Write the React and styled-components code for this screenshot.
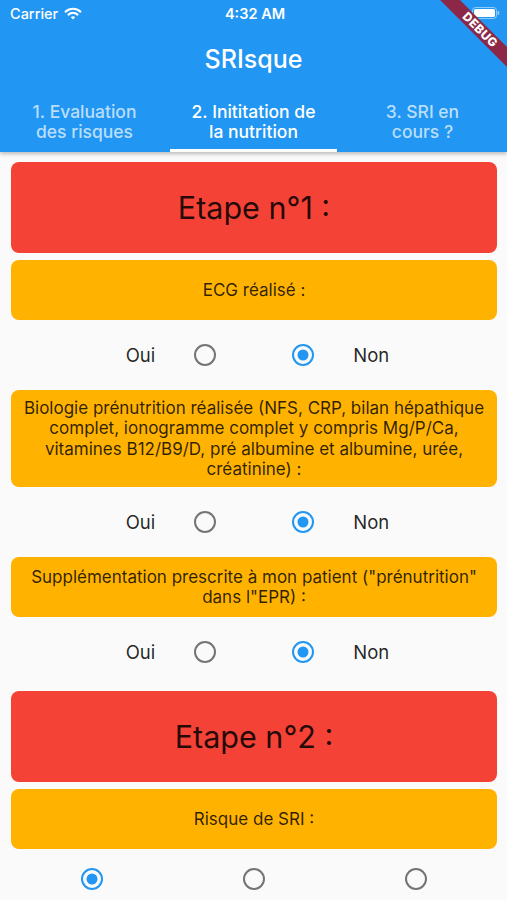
import React from 'react'
import styled, { createGlobalStyle } from 'styled-components'

const GlobalStyle = createGlobalStyle`
  body {
    margin: 0;
    background: #fafafa;
    font-family: Inter, "Noto Sans", sans-serif;
  }
`

const Screen = styled.div`
  position: relative;
  width: 507px;
  min-height: 900px;
  overflow: hidden;
  background: #fafafa;
`

const Header = styled.header`
  background: #2196f3;
  box-shadow: 0 2px 4px rgba(0, 0, 0, 0.25);
  color: #fff;
  position: relative;
  z-index: 1;
`

const StatusBar = styled.div`
  height: 24px;
  padding: 2px 7px 0 10px;
  box-sizing: border-box;
  display: grid;
  grid-template-columns: 1fr auto 1fr;
  align-items: center;
  font-size: 14.5px;
`

const Carrier = styled.div`
  display: flex;
  align-items: center;
  gap: 6px;
  font-weight: 500;
`

const Time = styled.div`
  font-weight: 600;
`

const Battery = styled.div`
  display: flex;
  justify-content: flex-end;
`

const Toolbar = styled.div`
  height: 69px;
  display: flex;
  align-items: center;
  justify-content: center;
  font-size: 25px;
  font-weight: 500;
`

const TabBar = styled.div`
  height: 59px;
  display: grid;
  grid-template-columns: repeat(3, 1fr);
`

const Tab = styled.div`
  position: relative;
  display: flex;
  align-items: center;
  justify-content: center;
  text-align: center;
  font-size: 17.5px;
  line-height: 20px;
  font-weight: 500;
  padding-bottom: 2px;
  color: ${props => props.active ? '#fff' : 'rgba(255, 255, 255, 0.7)'};

  &::after {
    content: '';
    display: ${props => props.active ? 'block' : 'none'};
    position: absolute;
    left: 1px;
    right: 1px;
    bottom: 0;
    height: 3px;
    background: #fff;
  }
`

const Content = styled.main`
  padding: 10px 10px 0 11px;
`

const StepCard = styled.div`
  height: 91px;
  margin-top: ${props => props.spaced ? '4px' : '0'};
  border-radius: 8px;
  background: #f44336;
  display: flex;
  align-items: center;
  justify-content: center;
  font-size: 30.5px;
  color: rgba(0, 0, 0, 0.87);
`

const QuestionCard = styled.div`
  min-height: 60px;
  margin-top: ${props => props.afterStep ? '7px' : '0'};
  box-sizing: border-box;
  padding: 8px 12px;
  border-radius: 8px;
  background: #ffb300;
  display: flex;
  align-items: center;
  justify-content: center;
  text-align: center;
  font-size: 17px;
  line-height: 20.25px;
  color: rgba(0, 0, 0, 0.82);
`

const AnswerRow = styled.div`
  height: 70px;
  padding-left: 7px;
  display: flex;
  align-items: center;
  justify-content: center;
`

const Label = styled.span`
  font-size: 18.5px;
  color: rgba(0, 0, 0, 0.87);
  margin-right: ${props => props.gapRight || 0}px;
  margin-left: ${props => props.gapLeft || 0}px;
`

const Radio = styled.span`
  position: relative;
  display: inline-block;
  flex: none;
  width: 22px;
  height: 22px;
  box-sizing: border-box;
  border-radius: 50%;
  border: 2.5px solid ${props => props.checked ? '#2196f3' : '#747474'};
  margin-right: ${props => props.gapRight || 0}px;

  &::after {
    content: '';
    display: ${props => props.checked ? 'block' : 'none'};
    position: absolute;
    left: 50%;
    top: 50%;
    width: 11px;
    height: 11px;
    border-radius: 50%;
    background: #2196f3;
    transform: translate(-50%, -50%);
  }
`

const ChoiceRow = styled.div`
  height: 60px;
  display: grid;
  grid-template-columns: repeat(3, 1fr);
  align-items: center;
  justify-items: center;
`

const Corner = styled.div`
  position: absolute;
  top: 0;
  right: 0;
  width: 100px;
  height: 100px;
  overflow: hidden;
  pointer-events: none;
  z-index: 2;
`

const Ribbon = styled.div`
  position: absolute;
  left: 3px;
  top: 23px;
  width: 140px;
  height: 14px;
  transform: rotate(45deg);
  background: #8c2747;
  color: #fff;
  font-size: 12px;
  font-weight: 800;
  letter-spacing: 0.4px;
  line-height: 14px;
  text-align: center;
`

const WifiIcon = () => (
  <svg width="18" height="13" viewBox="0 0 18 13">
    <path d="M1.6 4.6 A11 11 0 0 1 16.4 4.6" stroke="#fff" strokeWidth="2.2" fill="none" strokeLinecap="round" />
    <path d="M4.5 7.6 A6.6 6.6 0 0 1 13.5 7.6" stroke="#fff" strokeWidth="2.2" fill="none" strokeLinecap="round" />
    <path d="M6.8 10.3 A3.2 3.2 0 0 1 11.2 10.3 L9 12.6 Z" fill="#fff" />
  </svg>
)

const BatteryIcon = () => (
  <svg width="28" height="12" viewBox="0 0 28 12">
    <rect x="0.5" y="0.5" width="24" height="11" rx="3" stroke="rgba(255,255,255,0.5)" fill="none" />
    <rect x="2" y="2" width="21" height="8" rx="1.6" fill="#fff" />
    <rect x="25.5" y="4" width="1.8" height="4" rx="0.8" fill="rgba(255,255,255,0.5)" />
  </svg>
)

const YesNo = ({ yes }) => (
  <AnswerRow>
    <Label gapRight={39}>Oui</Label>
    <Radio checked={yes} gapRight={76} />
    <Radio checked={!yes} />
    <Label gapLeft={39}>Non</Label>
  </AnswerRow>
)

const tabs = [
  ['1. Evaluation', 'des risques'],
  ['2. Inititation de', 'la nutrition'],
  ['3. SRI en', 'cours ?'],
]

class App extends React.Component {
  constructor(props) {
    super(props)
    this.state = { activeTab: 1 }
  }

  render() {
    return (
      <Screen>
        <GlobalStyle />
        <Header>
          <StatusBar>
            <Carrier>Carrier <WifiIcon /></Carrier>
            <Time>4:32 AM</Time>
            <Battery><BatteryIcon /></Battery>
          </StatusBar>
          <Toolbar>SRIsque</Toolbar>
          <TabBar>
            {tabs.map((lines, index) => (
              <Tab key={index} active={this.state.activeTab === index} onClick={() => this.setState({ activeTab: index })}>
                {lines[0]}<br />{lines[1]}
              </Tab>
            ))}
          </TabBar>
        </Header>

        <Content>
          <StepCard>Etape n°1 :</StepCard>
          <QuestionCard afterStep>ECG réalisé :</QuestionCard>
          <YesNo yes={false} />
          <QuestionCard>
            Biologie prénutrition réalisée (NFS, CRP, bilan hépathique<br />
            complet, ionogramme complet y compris Mg/P/Ca,<br />
            vitamines B12/B9/D, pré albumine et albumine, urée,<br />
            créatinine) :
          </QuestionCard>
          <YesNo yes={false} />
          <QuestionCard>
            Supplémentation prescrite à mon patient ("prénutrition"<br />
            dans l"EPR) :
          </QuestionCard>
          <YesNo yes={false} />

          <StepCard spaced>Etape n°2 :</StepCard>
          <QuestionCard afterStep>Risque de SRI :</QuestionCard>
          <ChoiceRow>
            <Radio checked />
            <Radio />
            <Radio />
          </ChoiceRow>
        </Content>

        <Corner>
          <Ribbon>DEBUG</Ribbon>
        </Corner>
      </Screen>
    )
  }
}

export default App
